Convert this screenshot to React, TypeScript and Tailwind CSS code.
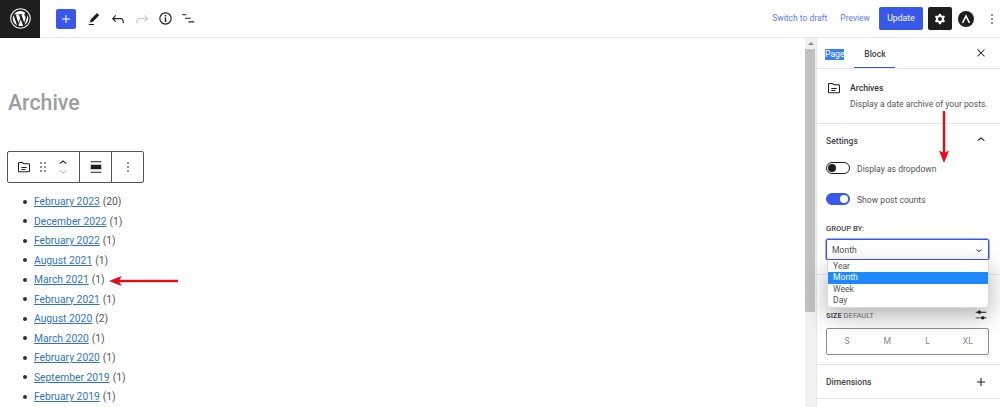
const archives = [
  ["February 2023", "(20)"],
  ["December 2022", "(1)"],
  ["February 2022", "(1)"],
  ["August 2021", "(1)"],
  ["March 2021", "(1)"],
  ["February 2021", "(1)"],
  ["August 2020", "(2)"],
  ["March 2020", "(1)"],
  ["February 2020", "(1)"],
  ["September 2019", "(1)"],
  ["February 2019", "(1)"],
];

const folderPath =
  "M19 6.500h-6.900L10.300 4.700a1 1 0 0 0-.7-.2H5c-1.100 0-2 .9-2 2V18c0 1.100.9 2 2 2h14c1.100 0 2-.9 2-2V8.500c0-1.100-.9-2-2-2Zm.5 11.500c0 .3-.2.500-.5.500H5a.5.500 0 0 1-.5-.5V6.500c0-.3.200-.5.500-.5h4.400L11.500 8H19c.3 0 .5.200.5.500V18ZM8 12h8v1.500H8V12Zm0 3h6v1.500H8V15Z";
const chevronUp = "M6.500 12.400 12 8l5.500 4.400-.9 1.200L12 10l-4.500 3.600-1-1.200Z";
const chevronDown = "M17.500 11.600 12 16l-5.500-4.400.9-1.200L12 14l4.500-3.600 1 1.200Z";
const plusPath = "M18 11.200h-5.200V6h-1.600v5.200H6v1.600h5.200V18h1.600v-5.200H18z";
const dotsPath = "M13 19h-2v-2h2v2Zm0-6h-2v-2h2v2Zm0-6h-2V5h2v2Z";
const cogPath =
  "M10.289 4.836A1 1 0 0 1 11.275 4h1.306a1 1 0 0 1 .987.836l.244 1.466c.787.26 1.503.679 2.108 1.218l1.393-.522a1 1 0 0 1 1.216.437l.653 1.13a1 1 0 0 1-.23 1.273l-1.148.944a6.025 6.025 0 0 1 0 2.435l1.149.946a1 1 0 0 1 .23 1.272l-.653 1.13a1 1 0 0 1-1.216.437l-1.394-.522c-.605.54-1.320.958-2.108 1.218l-.244 1.466a1 1 0 0 1-.987.836h-1.306a1 1 0 0 1-.986-.836l-.244-1.466a5.995 5.995 0 0 1-2.108-1.218l-1.394.522a1 1 0 0 1-1.217-.436l-.653-1.131a1 1 0 0 1 .23-1.272l1.149-.946a6.026 6.026 0 0 1 0-2.435l-1.148-.944a1 1 0 0 1-.23-1.272l.653-1.131a1 1 0 0 1 1.217-.437l1.393.522a5.994 5.994 0 0 1 2.108-1.218l.244-1.466ZM14.929 12a3 3 0 1 1-6 0 3 3 0 0 1 6 0Z";

function Icon({ d, className = "", size = 24 }: { d: string; className?: string; size?: number }) {
  return (
    <svg width={size} height={size} viewBox="0 0 24 24" fill="currentColor" fillRule="evenodd" className={`shrink-0 ${className}`}>
      <path d={d} />
    </svg>
  );
}

function WpLogo() {
  return (
    <svg width="21" height="21" viewBox="0 0 24 24" fill="none">
      <circle cx="12" cy="12" r="11.200" stroke="#fff" strokeWidth="1.200" />
      <path
        fill="#fff"
        d="M3.200 12c0 3.500 2 6.500 5 8L4 8.400A8.800 8.800 0 0 0 3.200 12Zm14.700-.4c0-1.100-.4-1.800-.7-2.400-.4-.7-.8-1.200-.8-1.900 0-.7.600-1.400 1.400-1.400h.1A8.800 8.800 0 0 0 4.600 7.100h.6c.9 0 2.300-.1 2.300-.1.500 0 .5.700.1.700 0 0-.5.100-1 .1l3.100 9.200 1.900-5.600-1.300-3.600c-.5 0-.9-.1-.9-.1-.5 0-.4-.8 0-.7 0 0 1.400.1 2.300.1.900 0 2.300-.1 2.300-.1.500 0 .5.700.1.700 0 0-.5.100-1 .1l3.100 9.100.8-2.800c.4-1.100.7-1.900.7-2.500Zm-5.700 1.200-2.600 7.500a8.800 8.800 0 0 0 5.400-.1l-.1-.1-2.700-7.300Zm7.500-5c0 .3.100.6.100 1 0 .9-.2 1.900-.7 3.200l-2.700 7.700A8.800 8.800 0 0 0 19.700 7.800Z"
      />
    </svg>
  );
}

function Toggle({ on }: { on: boolean }) {
  return (
    <span
      className={`flex h-[12px] w-[24px] shrink-0 items-center rounded-full border ${
        on ? "justify-end border-[#3858e9] bg-[#3858e9] pr-[1px]" : "border-[#1e1e1e] bg-white pl-[1px]"
      }`}
    >
      <span className={`h-[8px] w-[8px] rounded-full ${on ? "bg-white" : "bg-[#1e1e1e]"}`} />
    </span>
  );
}

function RedArrow({ className, vertical }: { className: string; vertical?: boolean }) {
  return vertical ? (
    <svg width="12" height="52" viewBox="0 0 12 52" className={className}>
      <rect x="4.800" y="0" width="2.400" height="44" fill="#ee0a14" />
      <path d="M1 39.500 L6 42 L11 39.500 L6 52 Z" fill="#ee0a14" />
    </svg>
  ) : (
    <svg width="70" height="12" viewBox="0 0 70 12" className={className}>
      <rect x="8" y="4.800" width="61" height="2.400" fill="#ee0a14" />
      <path d="M12.500 1 L10 6 L12.500 11 L0 6 Z" fill="#ee0a14" />
    </svg>
  );
}

export default function App() {
  return (
    <div className="relative flex h-[407px] w-[1000px] flex-col overflow-hidden bg-white font-['Roboto',sans-serif] text-[#1e1e1e]">
      {/* top bar */}
      <header className="flex h-[38px] shrink-0 items-center border-b border-[#e6e6e6]">
        <div className="flex h-[38px] w-[40px] items-center justify-center bg-[#1e1e1e]">
          <WpLogo />
        </div>
        <button className="ml-[16px] flex h-[20px] w-[20px] items-center justify-center rounded-[2px] bg-[#3858e9] text-white">
          <Icon size={16} d={plusPath} />
        </button>
        <Icon size={18} className="ml-[9px]" d="m19 7-3-3-8.500 8.500-1 4 4-1L19 7Zm-7 11.500H5V20h7v-1.500Z" />
        <Icon size={18} className="ml-[6px]" d="M18.300 11.700c-.6-.6-1.400-.9-2.300-.9H6.700l2.900-3.300-1.100-1-4.500 5L8.500 16l1-1-2.700-2.700H16c.5 0 .9.200 1.300.5 1 1 1 3.400 1 4.500v.3h1.500v-.2c0-1.500 0-4.300-1.500-5.700z" />
        <Icon size={18} className="ml-[6px] text-[#c9c9c9]" d="M15.600 6.500l-1.100 1 2.900 3.300H8c-.9 0-1.700.3-2.300.9-1.400 1.500-1.400 4.200-1.400 5.600v.2h1.500v-.3c0-1.100 0-3.500 1-4.500.3-.3.700-.5 1.300-.5h9.200L15 15l1 1 4.500-4.500-4.900-5z" />
        <Icon size={17} className="ml-[6px]" d="M12 3.200a8.800 8.800 0 1 0 0 17.600 8.800 8.800 0 0 0 0-17.600Zm0 16a7.200 7.200 0 1 1 0-14.400 7.200 7.200 0 0 1 0 14.400ZM11 7h2v2h-2V7Zm0 3.500h2V17h-2v-6.500Z" />
        <Icon size={17} className="ml-[6px]" d="M3 6h6v1.500H3V6Zm4 5h8v1.500H7V11Zm5 5h8v1.500h-8V16Z" />

        <div className="ml-auto flex items-center text-[#3858e9]">
          <span className="text-[8.500px] opacity-80">Switch to draft</span>
          <span className="ml-[13px] text-[8.500px] opacity-80">Preview</span>
          <button className="ml-[9px] flex h-[23px] w-[44px] items-center justify-center rounded-[2px] bg-[#3858e9] text-[8.700px] text-white">
            Update
          </button>
          <span className="ml-[5px] flex h-[23px] w-[24px] items-center justify-center rounded-[2px] bg-[#1e1e1e] text-white">
            <Icon size={16} d={cogPath} />
          </span>
          <span className="ml-[6px] flex h-[16px] w-[16px] items-center justify-center rounded-full bg-[#1e1e1e]">
            <svg width="10" height="10" viewBox="0 0 10 10" fill="none" stroke="#fff" strokeWidth="1.600">
              <path d="M1.500 9 5 2l3.500 7" />
            </svg>
          </span>
          <Icon size={16} className="ml-[10px] text-[#1e1e1e]" d={dotsPath} />
        </div>
      </header>

      <div className="flex min-h-0 flex-1">
        {/* editor canvas */}
        <main className="min-w-0 flex-1 overflow-hidden">
          <h1 className="ml-[8px] mt-[50px] text-[21.300px] font-medium leading-[30px] text-[#9a9ea3]">Archive</h1>
          <div className="ml-[7px] mt-[33px] flex h-[32px] w-[137px] items-stretch rounded-[2px] border border-[#555] bg-white">
            <div className="flex w-[72px] items-center border-r border-[#555] pl-[8px]">
              <Icon size={16} d={folderPath} />
              <Icon size={16} className="ml-[3px]" d="M8 7h2V5H8v2Zm0 6h2v-2H8v2Zm0 6h2v-2H8v2Zm6-14v2h2V5h-2Zm0 8h2v-2h-2v2Zm0 6h2v-2h-2v2Z" />
              <div className="ml-[4px] flex flex-col items-center">
                <Icon size={16} className="-mb-[8px]" d={chevronUp} />
                <Icon size={16} className="text-[#c4c4c4]" d={chevronDown} />
              </div>
            </div>
            <div className="flex w-[32px] items-center justify-center border-r border-[#555]">
              <Icon size={18} d="M5 15h14V9H5v6Zm0 4.800h14v-1.500H5v1.500ZM5 4.200v1.500h14V4.200H5Z" />
            </div>
            <div className="flex flex-1 items-center justify-center">
              <Icon size={16} d={dotsPath} />
            </div>
          </div>
          <ul className="ml-[23px] mt-[9px] text-[10.300px] leading-[19.500px] text-[#555]">
            {archives.map(([label, count]) => (
              <li key={label} className="flex items-center">
                <span className="mr-[7px] h-[4px] w-[4px] rounded-full bg-[#333]" />
                <a className="text-[#2f74c0] underline">{label}</a>
                <span className="ml-[3px]">{count}</span>
              </li>
            ))}
          </ul>
        </main>

        {/* scrollbar */}
        <div className="flex w-[11px] shrink-0 flex-col bg-[#f1f1f1]">
          <span className="flex h-[11px] items-center justify-center">
            <span className="h-0 w-0 border-x-[3px] border-b-[3px] border-x-transparent border-b-[#8a8a8a]" />
          </span>
          <div className="h-[263px] w-[10px] bg-[#c1c1c1]" />
        </div>

        {/* sidebar */}
        <aside className="w-[184px] shrink-0 border-l border-[#e6e6e6] text-[8.600px]">
          <div className="flex h-[31px] items-stretch border-b border-[#e6e6e6] pl-[8px] pr-[12px]">
            <span className="flex items-center pt-[3px]">
              <span className="bg-[#3b82e8] leading-[11px] text-white">Page</span>
            </span>
            <span className="ml-[10px] flex w-[41px] items-center justify-center border-b border-[#3858e9] pt-[3px] font-medium text-[#444]">Block</span>
            <Icon size={14} className="my-auto ml-auto" d="M13 11.800 18.500 6.400l-1-1L12 10.800 6.500 5.300l-1 1 5.400 5.500-5.400 5.500 1 1 5.500-5.500 5.500 5.500 1-1-5.500-5.500Z" />
          </div>
          <div className="flex h-[55px] items-start border-b border-[#e6e6e6] pl-[9px] pt-[11px]">
            <Icon size={16} d={folderPath} />
            <div className="ml-[8px] pt-[1px]">
              <p className="font-medium leading-[14px] text-[#333]">Archives</p>
              <p className="mt-[3px] whitespace-nowrap leading-[13px] text-[#555]">Display a date archive of your posts.</p>
            </div>
          </div>
          <div className="border-b border-[#e6e6e6] pl-[9px] pr-[11px]">
            <div className="flex h-[30px] items-center justify-between pt-[3px]">
              <span className="pt-[1px] font-medium text-[#444]">Settings</span>
              <Icon size={16} className="-mt-[2px]" d={chevronUp} />
            </div>
            <div className="mt-[8px] flex h-[12px] items-center gap-[7px]">
              <Toggle on={false} />
              <span className="pt-[2px] text-[#555]">Display as dropdown</span>
            </div>
            <div className="mt-[19px] flex h-[12px] items-center gap-[7px]">
              <Toggle on />
              <span className="pt-[2px] text-[#555]">Show post counts</span>
            </div>
            <p className="mt-[18px] text-[7.600px] font-medium leading-[12px] text-[#444]">GROUP BY:</p>
            <div className="mt-[4px] flex h-[21px] w-[163px] items-center justify-between rounded-[2px] border border-[#3858e9] pl-[5px] pr-[3px] text-[#555] shadow-[0_0_0_0.500px_#3858e9]">
              <span className="pt-[1px]">Month</span>
              <Icon size={12} className="text-[#1e1e1e]" d={chevronDown} />
            </div>
            <div className="h-[14px]" />
          </div>
          <div className="pl-[9px] pr-[11px] pt-[33px]">
            <div className="flex h-[14px] items-center justify-between">
              <span className="pt-[1px] text-[7.600px] uppercase text-[#777]">
                <b className="font-semibold text-[#444]">Size</b> Default
              </span>
              <Icon size={16} d="M14.500 13.800c-1.100 0-2.100.7-2.400 1.800H4V17h8.100c.3 1 1.300 1.800 2.400 1.800s2.100-.7 2.400-1.800H20v-1.500h-3.100c-.3-1-1.300-1.700-2.400-1.700zM11.900 7c-.3-1-1.300-1.800-2.400-1.800S7.400 6 7.100 7H4v1.500h3.100c.3 1 1.300 1.800 2.400 1.800s2.100-.7 2.400-1.800H20V7h-8.100z" />
            </div>
            <div className="mt-[6px] grid h-[27px] w-[163px] grid-cols-4 items-center rounded-[2px] border border-[#8d8d8d] text-center text-[#888]">
              <span>S</span>
              <span>M</span>
              <span>L</span>
              <span>XL</span>
            </div>
          </div>
          <div className="mt-[9px] flex h-[35px] items-center justify-between border-y border-[#e6e6e6] pl-[9px] pr-[11px]">
            <span className="pt-[1px] font-medium text-[#444]">Dimensions</span>
            <Icon size={16} d={plusPath} />
          </div>
        </aside>
      </div>

      {/* open select menu */}
      <ul className="absolute left-[827px] top-[260px] w-[162px] overflow-hidden rounded-b-[5px] border border-t-0 border-[#ddd] bg-white pt-[0.500px] text-[8.600px] leading-[11.500px] text-[#555] shadow-[0_8px_22px_rgba(0,0,0,0.3)]">
        <li className="pl-[5px]">Year</li>
        <li className="bg-[#1e88ff] pl-[5px] text-white">Month</li>
        <li className="pl-[5px]">Week</li>
        <li className="pl-[5px]">Day</li>
      </ul>

      {/* annotation arrows */}
      <RedArrow className="absolute left-[109px] top-[275px]" />
      <RedArrow vertical className="absolute left-[938px] top-[111px]" />
    </div>
  );
}
